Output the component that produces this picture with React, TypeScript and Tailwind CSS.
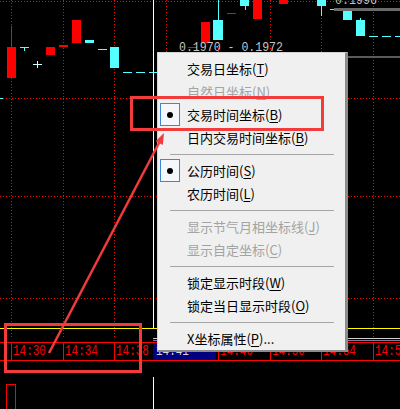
import React from 'react';

type Item = { label: string; hotkey: string; disabled?: boolean; checked?: boolean; suffix?: string } | 'sep';

const menuItems: Item[] = [
  { label: '交易日坐标', hotkey: 'T' },
  { label: '自然日坐标', hotkey: 'N', disabled: true },
  { label: '交易时间坐标', hotkey: 'B', checked: true },
  { label: '日内交易时间坐标', hotkey: 'B' },
  'sep',
  { label: '公历时间', hotkey: 'S', checked: true },
  { label: '农历时间', hotkey: 'L' },
  'sep',
  { label: '显示节气月相坐标线', hotkey: 'J', disabled: true },
  { label: '显示自定坐标', hotkey: 'C', disabled: true },
  'sep',
  { label: '锁定显示时段', hotkey: 'W' },
  { label: '锁定当日显示时段', hotkey: 'O' },
  'sep',
  { label: 'X坐标属性', hotkey: 'P', suffix: '...' },
];

// grid positions of the chart
const gridX = [11, 63, 114, 166, 218, 270, 321, 373];
const gridY = [1, 98, 196, 298];

// [x, y, w, h]
const redBars = [
  [7, 47, 9, 31], [46, 47, 9, 8], [59, 45, 9, 2], [72, 20, 9, 23],
  [201, 22, 9, 21], [227, 13, 9, 1], [253, 0, 9, 19], [279, 0, 9, 4], [188, 47, 9, 1],
];
const cyanBars = [
  [20, 47, 9, 1], [85, 40, 9, 3], [98, 49, 9, 1], [110, 47, 9, 21],
  [123, 72, 9, 1], [136, 72, 9, 1], [149, 72, 9, 1], [0, 98, 3, 1],
  [213, 20, 10, 20], [240, 0, 9, 6], [317, 0, 9, 6], [330, 9, 9, 1],
  [343, 11, 9, 9], [356, 20, 9, 16], [369, 36, 9, 1], [382, 36, 9, 1], [395, 36, 9, 1],
];
const cyanWicks = [
  [24, 47, 51], [218, 0, 20], [245, 6, 10], [321, 6, 16], [360, 18, 20],
];

// 14:42 sits under the crosshair tag, so it has no label
const timeCells = [
  { w: 52, t: '14:30' }, { w: 51, t: '14:34' }, { w: 52, t: '14:38' }, { w: 52, t: '' },
  { w: 52, t: '14:46' }, { w: 51, t: '14:50' }, { w: 52, t: '14:54' }, { w: 27, t: '14:58' },
];

function Chart() {
  return (
    <svg width={400} height={338} className="block" shapeRendering="crispEdges">
      {gridX.map((x) => (
        <line key={'v' + x} x1={x + 0.5} y1={0} x2={x + 0.5} y2={338} stroke="#ff0000" strokeDasharray="1 2" />
      ))}
      {gridY.map((y) => (
        <line key={'h' + y} x1={0} y1={y + 0.5} x2={400} y2={y + 0.5} stroke="#ff0000" strokeDasharray="1 2" />
      ))}
      <line x1={11.5} y1={26} x2={11.5} y2={47} stroke="#ff0000" />
      {redBars.map(([x, y, w, h], i) => (
        <rect key={'r' + i} x={x} y={y} width={w} height={h} fill="#ff0000" />
      ))}
      {cyanBars.map(([x, y, w, h], i) => (
        <rect key={'c' + i} x={x} y={y} width={w} height={h} fill="#55ffff" />
      ))}
      {cyanWicks.map(([x, y1, y2], i) => (
        <line key={'w' + i} x1={x + 0.5} y1={y1} x2={x + 0.5} y2={y2} stroke="#55ffff" />
      ))}
      {/* small cross */}
      <line x1={33} y1={64.5} x2={42} y2={64.5} stroke="#d0ffff" />
      <line x1={37.5} y1={61} x2={37.5} y2={68} stroke="#d0ffff" />
      {/* grey price bars */}
      <rect x={334} y={8} width={66} height={3} fill="#6a6a6a" />
      <rect x={346} y={56} width={54} height={2} fill="#5a5a5a" />
      <text x={335} y={4} fontFamily="'Liberation Mono', monospace" fontSize={13} fill="#c4c4c4" textLength={42} lengthAdjust="spacingAndGlyphs">0.1996</text>
      <text x={179} y={51} fontFamily="'Liberation Mono', monospace" fontSize={13} fill="#c4c4c4" textLength={104} lengthAdjust="spacingAndGlyphs">0.1970 - 0.1972</text>
      {/* crosshair */}
      <line x1={153.5} y1={0} x2={153.5} y2={328} stroke="#ffffff" />
      <line x1={0} y1={328.5} x2={400} y2={328.5} stroke="#ffff00" />
    </svg>
  );
}

function Menu() {
  return (
    <div className="absolute left-[157px] top-[52px] w-[191px] bg-[#f0f0f0] border-l border-t border-[#d4d4d4] border-r-[3px] border-b-2 border-r-[#8c8c8c] border-b-[#8c8c8c] pt-[4px] px-[2px] font-['Noto_Sans_CJK_SC',sans-serif] text-[13px] leading-none">
      {menuItems.map((it, i) =>
        it === 'sep' ? (
          <div key={i} className="h-[10px] flex items-center pl-[10px] pr-[9px]">
            <div className="h-px w-full bg-[#a6a6a6]" />
          </div>
        ) : (
          <div key={i} className={`h-[23px] flex items-center ${it.disabled ? 'text-[#a3a3a3]' : 'text-black'}`}>
            <div className="w-[20px] h-[23px] mr-[7px] flex items-center justify-center">
              {it.checked && (
                <div className="w-[20px] h-[23px] border border-[#3c87d8] bg-[#f4f7fb] flex items-center justify-center">
                  <div className="w-[6px] h-[6px] rounded-full bg-black" />
                </div>
              )}
            </div>
            <span>
              {it.label}(<span className="underline underline-offset-2">{it.hotkey}</span>){it.suffix}
            </span>
          </div>
        )
      )}
    </div>
  );
}

function Annotations() {
  return (
    <>
      <div className="absolute left-[130px] top-[96px] w-[194px] h-[35px] border-[3px] border-[#f23b3b]" />
      <div className="absolute left-[4px] top-[323px] w-[138px] h-[50px] border-[3px] border-[#f23b3b]" />
      <svg className="absolute left-0 top-0 pointer-events-none" width={400} height={409}>
        <line x1={49} y1={353} x2={159.5} y2={142} stroke="#f23b3b" strokeWidth={2.5} />
        <polygon points="164,133 162.8,145 155.6,141.2" fill="#f23b3b" />
      </svg>
    </>
  );
}

export default function App() {
  return (
    <div className="relative w-[400px] h-[409px] bg-black overflow-hidden flex flex-col">
      <Chart />
      <div className="h-px ml-[153px] bg-[#d0d0d0]" />
      <div className="h-px" />
      <div className="h-px ml-[153px] bg-[#7a7aa0]" />
      <div className="h-px" />
      <div className="relative h-[19px] border-y border-[#ff0000] flex font-['Liberation_Mono',monospace] text-[15px] leading-[17px] text-[#ff0000]">
        <div className="w-[11px] shrink-0" />
        {timeCells.map((c, i) => (
          <div key={i} className="shrink-0 border-l border-[#ff0000] pl-px overflow-hidden whitespace-nowrap" style={{ width: c.w }}>
            {c.t && <span className="inline-block scale-x-[0.73] origin-left">{c.t}</span>}
          </div>
        ))}
        <div className="absolute left-[153px] top-0 w-[63px] h-[17px] bg-[#000080] text-[#d8d8d8] pl-[3px]">
          <span className="inline-block scale-x-[0.73] origin-left">14:41</span>
        </div>
      </div>
      <div className="relative flex-1">
        <svg width={400} height={48} className="block" shapeRendering="crispEdges">
          <line x1={153.5} y1={16} x2={153.5} y2={48} stroke="#ffffff" />
          <rect x={6.5} y={23.5} width={9} height={30} fill="none" stroke="#ff0000" />
        </svg>
      </div>
      <Menu />
      <Annotations />
    </div>
  );
}
